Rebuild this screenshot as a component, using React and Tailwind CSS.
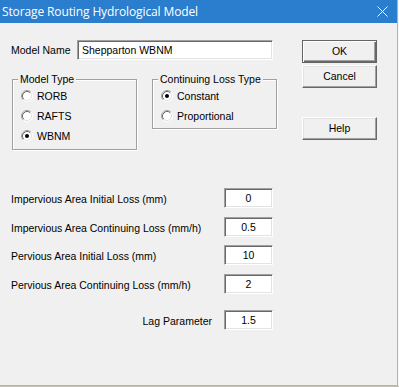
import React from "react";

const FONT = "font-['Liberation_Sans',Arial,sans-serif] text-[10.5px] text-black";

function Radio({ checked }) {
  return (
    <svg width="12" height="12" viewBox="0 0 12 12" className="shrink-0">
      <circle cx="6" cy="6" r="4.5" fill="#fff" />
      <path d="M2.11 9.89A5.5 5.5 0 0 1 9.89 2.11" stroke="#a0a0a0" fill="none" />
      <path d="M9.89 2.11A5.5 5.5 0 0 1 2.11 9.89" stroke="#fff" fill="none" />
      <path d="M2.82 9.18A4.5 4.5 0 0 1 9.18 2.82" stroke="#696969" fill="none" />
      <path d="M9.18 2.82A4.5 4.5 0 0 1 2.82 9.18" stroke="#e3e3e3" fill="none" />
      {checked && <circle cx="6" cy="6" r="2" fill="#000" />}
    </svg>
  );
}

function RadioRow({ label, checked }) {
  return (
    <div className="flex h-[20px] items-center gap-[4px] pl-[8px]">
      <Radio checked={checked} />
      <span className="leading-[13px]">{label}</span>
    </div>
  );
}

function Group({ title, className, children }) {
  return (
    <div
      className={`relative border border-[#a0a0a0] shadow-[1px_1px_0_#fff,inset_1px_1px_0_#fff] ${className}`}
    >
      <span className="absolute -top-[7px] left-[5px] bg-[#f0f0f0] px-[2px] leading-[13px]">{title}</span>
      <div className="pt-[6px]">{children}</div>
    </div>
  );
}

function TextBox({ value, className = "", align = "center" }) {
  return (
    <div
      className={`flex h-[20px] items-center border border-t-[#a0a0a0] border-l-[#a0a0a0] border-r-white border-b-white bg-white shadow-[inset_1px_1px_0_#696969,inset_-1px_-1px_0_#e3e3e3] ${
        align === "center" ? "justify-center" : "pl-[4px]"
      } ${className}`}
    >
      <span className="leading-[13px]">{value}</span>
    </div>
  );
}

function Button({ label, isDefault, className = "" }) {
  return (
    <div
      className={`flex h-[23px] w-[75px] items-center justify-center bg-[#f0f0f0] ${
        isDefault
          ? "border border-[#646464] shadow-[inset_1px_1px_0_#fff,inset_-1px_-1px_0_#696969,inset_-2px_-2px_0_#a0a0a0]"
          : "border border-t-white border-l-white border-r-[#696969] border-b-[#696969] shadow-[inset_-1px_-1px_0_#a0a0a0,inset_1px_1px_0_#e3e3e3]"
      } ${className}`}
    >
      <span className="leading-[13px]">{label}</span>
    </div>
  );
}

function ParamRow({ label, value, className = "", right }) {
  return (
    <div className={`flex h-[20px] items-center ${className}`}>
      <span className={`w-[213px] pt-[2px] leading-[13px] ${right ? "pr-[12px] text-right" : ""}`}>{label}</span>
      <TextBox value={value} className="w-[49px]" />
    </div>
  );
}

export default function App() {
  return (
    <div className="h-[387px] w-[399px] border-b border-[#c9c1b3] bg-[#f6f6f6]">
      <div className={`flex h-[386px] w-[398px] flex-col border-r border-b border-[#8fbdea] bg-[#f0f0f0] ${FONT}`}>
        <div className="flex h-[23px] shrink-0 items-center justify-between bg-[#2b7dcd] pl-[2px] pr-[9px] text-white">
          <span className="font-['Open_Sans',sans-serif] text-[12px] leading-[16px] tracking-[-0.12px]">
            Storage Routing Hydrological Model
          </span>
          <svg width="11" height="11" viewBox="0 0 11 11">
            <path d="M0.5 0.5L10.5 10.5M10.5 0.5L0.5 10.5" stroke="#fff" strokeWidth="1" />
          </svg>
        </div>

        <div className="pl-[11px] pt-[17px]">
          <div className="flex">
            <div className="w-[266px]">
              <div className="flex h-[20px] items-center">
                <span className="w-[66px] leading-[13px]">Model Name</span>
                <TextBox value="Shepparton WBNM" align="left" className="w-[196px]" />
              </div>
              <div className="mt-[19px] flex items-start">
                <Group title="Model Type" className="ml-[1px] h-[71px] w-[125px]">
                  <RadioRow label="RORB" />
                  <RadioRow label="RAFTS" />
                  <RadioRow label="WBNM" checked />
                </Group>
                <Group title="Continuing Loss Type" className="ml-[15px] h-[50px] w-[125px]">
                  <RadioRow label="Constant" checked />
                  <RadioRow label="Proportional" />
                </Group>
              </div>
            </div>
            <div className="ml-[25px] flex flex-col">
              <Button label="OK" isDefault />
              <Button label="Cancel" className="mt-[2px]" />
              <Button label="Help" className="mt-[29px]" />
            </div>
          </div>

          <div className="mt-[38px]">
            <ParamRow label="Impervious Area Initial Loss (mm)" value="0" />
            <ParamRow label="Impervious Area Continuing Loss (mm/h)" value="0.5" className="mt-[9px]" />
            <ParamRow label="Pervious Area Initial Loss (mm)" value="10" className="mt-[8px]" />
            <ParamRow label="Pervious Area Continuing Loss (mm/h)" value="2" className="mt-[9px]" />
            <ParamRow label="Lag Parameter" value="1.5" right className="mt-[16px]" />
          </div>
        </div>
      </div>
    </div>
  );
}
